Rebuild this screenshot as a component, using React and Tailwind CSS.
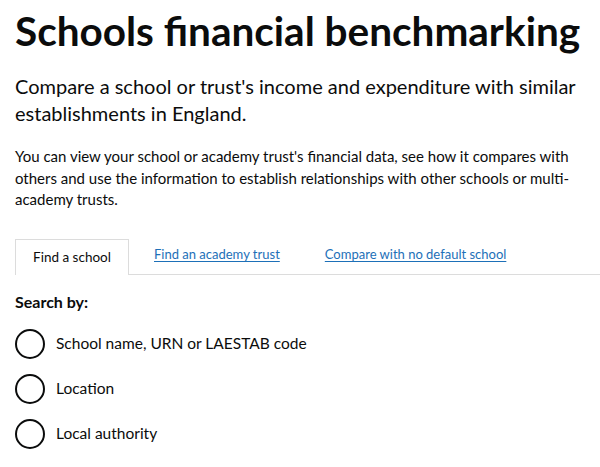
import React, { useState } from 'react';

const options = [
  { id: 'name', label: 'School name, URN or LAESTAB code' },
  { id: 'location', label: 'Location' },
  { id: 'la', label: 'Local authority' },
];

const tabs = ['Find a school', 'Find an academy trust', 'Compare with no default school'];

export default function App() {
  const [active, setActive] = useState(0);
  const [choice, setChoice] = useState(null);

  return (
    <div className="bg-white text-[#0b0c0c] pl-[15px] pt-[6px] font-['Lato',sans-serif]">
      <h1 className="text-[40.5px] leading-[50px] font-bold whitespace-nowrap">Schools financial benchmarking</h1>

      <p className="mt-[17px] text-[20px] leading-[27px] pr-[20px]">
        Compare a school or trust's income and expenditure with similar establishments in England.
      </p>

      <p className="mt-[19px] text-[15px] leading-[21.5px] pr-[20px]">
        You can view your school or academy trust's financial data, see how it compares with others and use the information to establish relationships with other schools or multi-academy trusts.
      </p>

      <div className="mt-[28px] flex items-end border-b border-[#dcdcdc]">
        {tabs.map((t, i) =>
          i === active ? (
            <button
              key={t}
              onClick={() => setActive(i)}
              className="h-[36px] w-[114px] -mb-px border border-b-0 border-[#dcdcdc] bg-white text-[13.5px]"
            >
              {t}
            </button>
          ) : (
            <a
              key={t}
              href="#"
              onClick={(e) => { e.preventDefault(); setActive(i); }}
              className="ml-[25px] mr-[20px] mb-[9px] text-[13px] text-[#1d70b8] underline underline-offset-2"
            >
              {t}
            </a>
          )
        )}
      </div>

      <div className="mt-[15px] text-[16px] font-bold">Search by:</div>

      <div className="mt-[15px] flex flex-col gap-[15px]">
        {options.map((o) => (
          <label key={o.id} className="flex items-center gap-[11px] cursor-pointer">
            <span className="w-[30px] h-[30px] rounded-full border-2 border-[#0b0c0c] flex items-center justify-center">
              {choice === o.id && <span className="w-[14px] h-[14px] rounded-full bg-[#0b0c0c]" />}
            </span>
            <input type="radio" name="search" className="sr-only" checked={choice === o.id} onChange={() => setChoice(o.id)} />
            <span className="text-[15.5px]">{o.label}</span>
          </label>
        ))}
      </div>
    </div>
  );
}
